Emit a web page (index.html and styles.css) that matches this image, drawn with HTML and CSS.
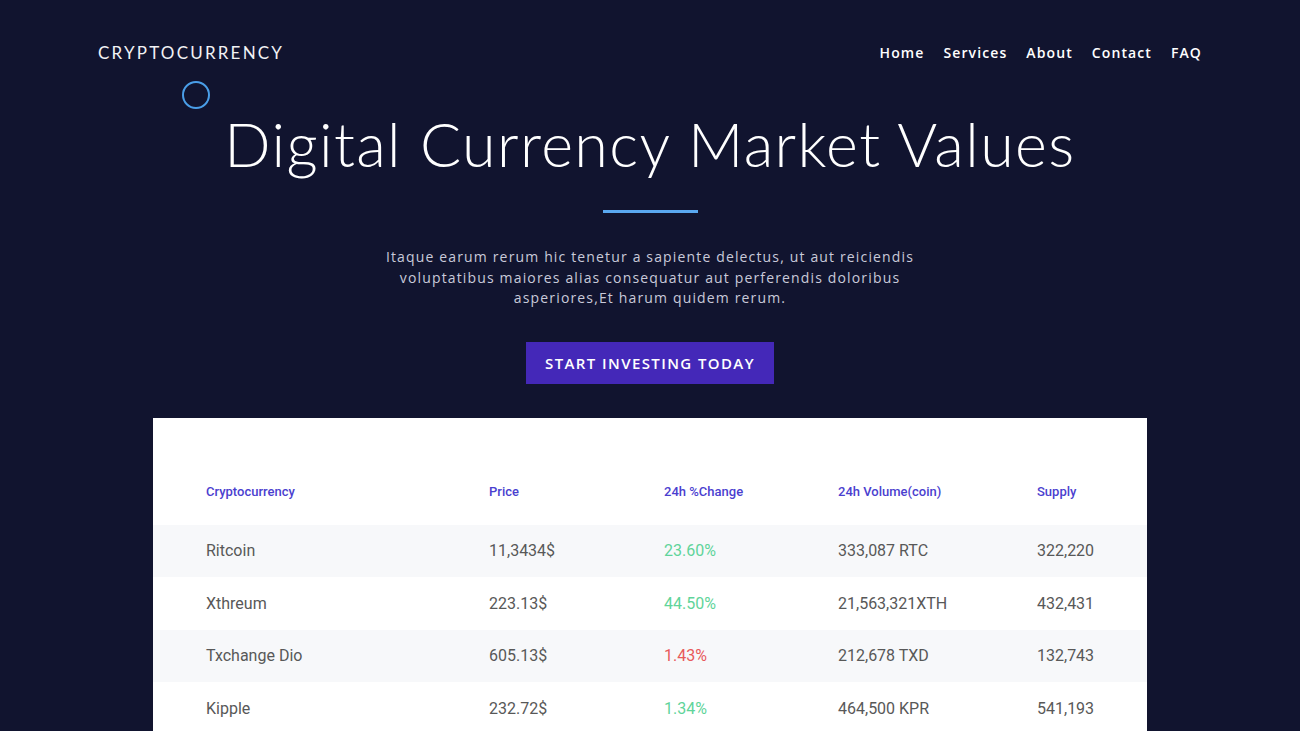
FILE: index.html
```html
<!DOCTYPE html>
<html lang="en">
<head>
    <meta charset="UTF-8">
    <title>Cryptocurrency</title>
    <link rel="stylesheet" href="styles.css">
</head>
<body>
    <header class="topbar">
        <div class="logo">CRYPTOCURRENCY</div>
        <nav class="menu">
            <a href="#">Home</a>
            <a href="#">Services</a>
            <a href="#">About</a>
            <a href="#">Contact</a>
            <a href="#">FAQ</a>
        </nav>
        <span class="ring"></span>
    </header>

    <section class="hero">
        <h1>Digital Currency Market Values</h1>
        <div class="bar"></div>
        <p>Itaque earum rerum hic tenetur a sapiente delectus, ut aut reiciendis voluptatibus maiores alias consequatur aut perferendis doloribus asperiores,Et harum quidem rerum.</p>
        <a href="#" class="cta">START INVESTING TODAY</a>
    </section>

    <!-- Market table -->
    <div class="market">
        <table>
            <thead>
                <tr>
                    <th>Cryptocurrency</th>
                    <th>Price</th>
                    <th>24h %Change</th>
                    <th>24h Volume(coin)</th>
                    <th>Supply</th>
                </tr>
            </thead>
            <tbody>
                <tr>
                    <td>Ritcoin</td>
                    <td>11,3434$</td>
                    <td class="up">23.60%</td>
                    <td>333,087 RTC</td>
                    <td>322,220</td>
                </tr>
                <tr>
                    <td>Xthreum</td>
                    <td>223.13$</td>
                    <td class="up">44.50%</td>
                    <td>21,563,321XTH</td>
                    <td>432,431</td>
                </tr>
                <tr>
                    <td>Txchange Dio</td>
                    <td>605.13$</td>
                    <td class="down">1.43%</td>
                    <td>212,678 TXD</td>
                    <td>132,743</td>
                </tr>
                <tr>
                    <td>Kipple</td>
                    <td>232.72$</td>
                    <td class="up">1.34%</td>
                    <td>464,500 KPR</td>
                    <td>541,193</td>
                </tr>
            </tbody>
        </table>
    </div>
</body>
</html>
```

FILE: styles.css
```css
body {
    margin: 0;
    background-color: #11142f;
    font-family: "Open Sans", sans-serif;
    color: #fff;
    overflow: hidden;
}
.topbar {
    position: relative;
    display: flex;
    justify-content: space-between;
    align-items: center;
    padding: 38px 98px 0 98px;
    height: 28px;
}
.logo {
    font-family: "Lato", sans-serif;
    font-weight: 400;
    font-size: 17px;
    letter-spacing: 2.2px;
    color: #f2f2f5;
}
.menu {
    display: flex;
    gap: 19px;
}
.menu a {
    color: #fff;
    text-decoration: none;
    font-size: 14px;
    font-weight: 600;
    letter-spacing: 1.1px;
}
.ring {
    position: absolute;
    left: 182px;
    top: 81px;
    width: 24px;
    height: 24px;
    border: 2px solid #4a9ee8;
    border-radius: 50%;
}
.hero {
    text-align: center;
    padding-top: 41px;
}
.hero h1 {
    margin: 0;
    font-family: "Lato", sans-serif;
    font-weight: 300;
    font-size: 61px;
    line-height: 74px;
    letter-spacing: 1.4px;
    color: #fff;
}
.bar {
    width: 95px;
    height: 3px;
    margin: 29px auto 0;
    background-color: #5aa8f0;
}
.hero p {
    width: 560px;
    margin: 34px auto 0;
    font-size: 14px;
    line-height: 20.5px;
    letter-spacing: 1.15px;
    color: #c9cada;
}
.cta {
    display: inline-block;
    margin-top: 33px;
    width: 248px;
    height: 42px;
    line-height: 42px;
    background-color: #4428b8;
    color: #fff;
    text-decoration: none;
    font-size: 15px;
    font-weight: 600;
    letter-spacing: 1.4px;
}
.market {
    width: 994px;
    margin: 34px auto 0;
    padding-top: 66px;
    background-color: #fff;
}
.market table {
    width: 100%;
    border-collapse: collapse;
    font-family: Roboto, sans-serif;
}
.market th {
    text-align: left;
    font-size: 13px;
    font-weight: 500;
    color: #4b3fcf;
    height: 41px;
    vertical-align: top;
    padding: 0;
}
.market td {
    height: 52.5px;
    padding: 0 0 0 0;
    font-size: 16px;
    color: #585858;
}
.market th:first-child, .market td:first-child {
    padding-left: 53px;
    width: 283px;
}
.market th:nth-child(2), .market td:nth-child(2) { width: 175px; }
.market th:nth-child(3), .market td:nth-child(3) { width: 174px; }
.market th:nth-child(4), .market td:nth-child(4) { width: 199px; }
.market tbody tr:nth-child(odd) {
    background-color: #f7f8fa;
}
.up { color: #5fd49a !important; }
.down { color: #e85a5a !important; }
```
